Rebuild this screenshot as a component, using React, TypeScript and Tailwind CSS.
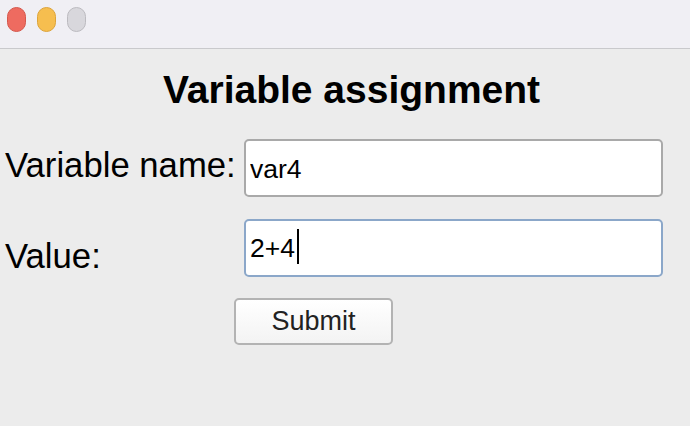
import React, { useState } from "react";

export default function App() {
  const [name, setName] = useState("var4");
  const [value] = useState("2+4");

  return (
    <div
      className="w-[690px] h-[426px] bg-[#ececec] flex flex-col overflow-hidden"
      style={{ fontFamily: "'Liberation Sans', Arial, sans-serif" }}
    >
      {/* title bar */}
      <div className="h-[49px] shrink-0 bg-[#f0eff4] border-b border-[#c9c9cc] flex items-start gap-[11px] pl-[7px] pt-[7px]">
        <span className="w-[19px] h-[25px] shrink-0 rounded-full bg-[#ee6b60] border border-[#d5574c]" />
        <span className="w-[19px] h-[25px] shrink-0 rounded-full bg-[#f6be4f] border border-[#dda43a]" />
        <span className="w-[19px] h-[25px] shrink-0 rounded-full bg-[#d8d7dc] border border-[#bcbbc0]" />
      </div>

      <div className="flex flex-col">
        <h1 className="text-center text-[39px] font-bold text-black leading-none mt-[21px] pl-[13px]">
          Variable assignment
        </h1>

        <div className="flex items-start mt-[30px] pl-[5px]">
          <label className="w-[239px] pt-[9px] text-[34.7px] text-black leading-none">Variable name:</label>
          <input
            value={name}
            onChange={(e) => setName(e.target.value)}
            className="w-[419px] h-[58px] bg-white border-2 border-[#a9a9a9] rounded-[5px] pl-[4px] pt-[2px] text-[26.5px] text-black outline-none"
          />
        </div>

        <div className="flex items-start mt-[22px] pl-[5px]">
          <label className="w-[239px] pt-[20px] text-[34.7px] text-black leading-none">Value:</label>
          <div className="w-[419px] h-[58px] bg-white border-2 border-[#8ba7c9] rounded-[5px] pl-[4px] pt-[2px] flex items-center">
            <span className="text-[26.5px] text-black">{value}</span>
            <span className="w-[2px] h-[35px] bg-black ml-[2px] -mt-[5px]" />
          </div>
        </div>

        <div className="flex pl-[234px] mt-[21px]">
          <button className="w-[159px] h-[47px] rounded-[5px] border-2 border-[#b3b3b3] bg-gradient-to-b from-white to-[#f3f3f3] text-[27px] text-[#222]">
            Submit
          </button>
        </div>
      </div>
    </div>
  );
}
